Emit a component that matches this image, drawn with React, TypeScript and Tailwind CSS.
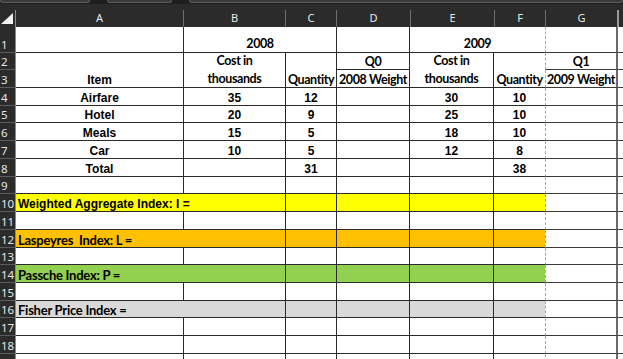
import React from "react";

const arial = "font-['Liberation_Sans',Arial,sans-serif] font-bold text-[12px] text-black";
const cal = "font-['Lato',sans-serif] font-bold text-[12.5px] tracking-[-0.4px] text-black";
const calBand = "font-['Lato',sans-serif] font-bold text-[13px] tracking-[-0.25px] text-black";

const rowHeights = [26, 17, 18, 18, 17, 18, 18, 18, 17, 18, 18, 18, 17, 18, 18, 17, 18, 18, 12];

const RowHead = ({ n }: { n?: number }) => (
  <div className="bg-[#2b2b2b] border-b border-[#5c5c5c] border-r border-r-[#8a8a8a] flex items-end pl-[1px] font-['Noto_Sans',sans-serif] text-[11.5px] leading-[15px] text-[#e6e6e6]">
    {n}
  </div>
);

const Cell = ({ cls = "", children }: { cls?: string; children?: React.ReactNode }) => (
  <div className={"border-b border-r border-[#2a2a2a] flex items-end justify-center whitespace-nowrap leading-[14px] " + cls}>
    {children}
  </div>
);

// column G sits right of the page-break line
const GCell = ({ cls = "", children }: { cls?: string; children?: React.ReactNode }) => (
  <div className={"border-b border-b-[#3a3a3a] border-l border-solid [border-left-style:dashed] border-l-[#a8a8a8] border-r-2 border-r-[#6a6a6a] flex items-end justify-center whitespace-nowrap leading-[14px] " + cls}>
    {children}
  </div>
);

const HCell = () => <div className="border-b border-[#3a3a3a]" />;

const data = [
  ["Airfare", "35", "12", "30", "10"],
  ["Hotel", "20", "9", "25", "10"],
  ["Meals", "15", "5", "18", "10"],
  ["Car", "10", "5", "12", "8"],
  ["Total", "", "31", "", "38"],
];

const bands = [
  { n: 10, label: "Weighted Aggregate Index: I =", bg: "bg-[#ffff00]", font: arial },
  { n: 12, label: "Laspeyres\u00a0 Index: L =", bg: "bg-[#ffc000]", font: calBand },
  { n: 14, label: "Passche Index: P =", bg: "bg-[#92d050]", font: calBand },
  { n: 16, label: "Fisher Price Index =", bg: "bg-[#d9d9d9]", font: calBand },
];

const EmptyRow = ({ n }: { n?: number }) => (
  <>
    <RowHead n={n} />
    <Cell />
    <Cell />
    <Cell />
    <Cell />
    <Cell />
    <Cell cls="border-r-0" />
    <GCell />
    <HCell />
  </>
);

export default function App() {
  const cols = ["A", "B", "C", "D", "E", "F", "G"];
  const colW = ["w-[168px]", "w-[102px]", "w-[51px]", "w-[74px]", "w-[84px]", "w-[51px]", "w-[73px]"];

  return (
    <div className="w-[623px] h-[359px] overflow-hidden bg-white flex flex-col">
      {/* tab strip */}
      <div className="h-[4px] bg-[#1f1f1f] flex gap-[17px] shrink-0">
        <div className="w-[90px] h-[3px] bg-[#3a3a3a] border-x border-b border-[#5e5e5e] rounded-b-[4px]" />
        <div className="w-[65px] h-[3px] bg-[#3a3a3a] border-x border-b border-[#5e5e5e] rounded-b-[4px]" />
        <div className="flex-1 h-[3px] bg-[#3a3a3a] border-x border-b border-[#5e5e5e] rounded-b-[4px]" />
      </div>

      {/* column headers */}
      <div className="h-[23px] bg-[#2b2b2b] flex pt-[6px] shrink-0 font-['Noto_Sans',sans-serif] text-[11px] text-[#e8e8e8]">
        <div className="w-[16px] border-r border-[#8a8a8a] relative">
          <svg width="13" height="12" viewBox="0 0 13 12" className="absolute left-[1px] top-[3px]">
            <polygon points="12,0 12,11 0,11" fill="#f2f2f2" />
          </svg>
        </div>
        {cols.map((c, i) => (
          <div
            key={c}
            className={
              colW[i] +
              " flex items-center justify-center border-r " +
              (i === 6 ? "border-r-2 border-[#9a9a9a]" : "border-[#6e6e6e]")
            }
          >
            {c}
          </div>
        ))}
        <div className="flex-1" />
      </div>

      {/* sheet */}
      <div
        className="grid grid-cols-[16px_168px_102px_51px_73px_84px_51px_73px_1fr]"
        style={{ gridTemplateRows: rowHeights.map((h) => h + "px").join(" ") }}
      >
        {/* row 1 */}
        <RowHead n={1} />
        <Cell />
        <Cell cls={"col-span-2 pb-[1px] " + cal}>2008</Cell>
        <Cell />
        <Cell cls={"col-span-2 border-r-0 pb-[1px] " + cal}>2009</Cell>
        <GCell />
        <HCell />

        {/* rows 2-3 */}
        <RowHead n={2} />
        <Cell cls={"row-span-2 " + arial}>Item</Cell>
        <Cell cls={"row-span-2 " + cal}>
          <div className="text-center leading-[18px] -mb-[1px]">
            Cost in
            <br />
            thousands
          </div>
        </Cell>
        <Cell cls={"row-span-2 " + cal}>Quantity</Cell>
        <Cell cls={cal}>Q0</Cell>
        <Cell cls={"row-span-2 " + cal}>
          <div className="text-center leading-[18px] -mb-[1px]">
            Cost in
            <br />
            thousands
          </div>
        </Cell>
        <Cell cls={"row-span-2 border-r-0 " + cal}>Quantity</Cell>
        <GCell cls={cal}>Q1</GCell>
        <HCell />

        <RowHead n={3} />
        <Cell cls={cal}>2008 Weight</Cell>
        <GCell cls={cal}>2009 Weight</GCell>
        <HCell />

        {/* data rows 4-8 */}
        {data.map((r, i) => (
          <React.Fragment key={r[0]}>
            <RowHead n={i + 4} />
            <Cell cls={arial}>{r[0]}</Cell>
            <Cell cls={arial}>{r[1]}</Cell>
            <Cell cls={arial}>{r[2]}</Cell>
            <Cell />
            <Cell cls={arial}>{r[3]}</Cell>
            <Cell cls={"border-r-0 " + arial}>{r[4]}</Cell>
            <GCell />
            <HCell />
          </React.Fragment>
        ))}

        <EmptyRow n={9} />

        {bands.map((b) => (
          <React.Fragment key={b.n}>
            <RowHead n={b.n} />
            <Cell cls={"col-span-2 justify-start pl-[2px] " + b.bg + " " + b.font}>{b.label}</Cell>
            <Cell cls={b.bg} />
            <Cell cls={b.bg} />
            <Cell cls={b.bg} />
            <Cell cls={"border-r-0 " + b.bg} />
            <GCell />
            <HCell />
            <EmptyRow n={b.n + 1} />
          </React.Fragment>
        ))}

        <EmptyRow n={18} />
        <EmptyRow />
      </div>
    </div>
  );
}
